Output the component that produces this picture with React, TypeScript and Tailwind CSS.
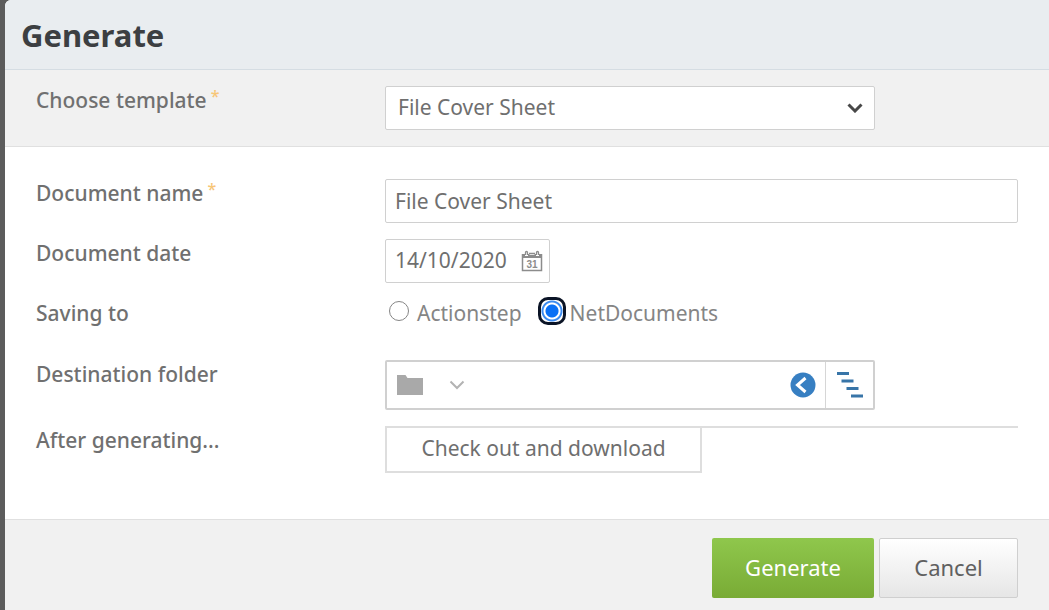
import { useState } from 'react';
import type { ReactNode } from 'react';
import cx from 'clsx';

const fieldStyle = 'h-11 rounded-xs border border-[#d0d0d0] bg-white text-[#6f6f6f]';

interface FieldRowProps {
  label: string;
  htmlFor?: string;
  id?: string;
  required?: boolean;
  className?: string;
  children: ReactNode;
}

const FieldRow = ({ label, htmlFor, id, required, className, children }: FieldRowProps) => {
  const Label = htmlFor ? 'label' : 'span';

  return (
    <div className={cx('grid grid-cols-[minmax(0,349px)_minmax(0,1fr)] items-start', className)}>
      <Label htmlFor={htmlFor} id={id} className="flex gap-1 leading-7 font-medium text-[#707070]">
        {label}
        {required && <span className="text-base leading-5 text-[#f7c677]">*</span>}
      </Label>
      {children}
    </div>
  );
};

const ChevronIcon = ({ className }: { className?: string }) => (
  <svg viewBox="0 0 16 10" fill="none" stroke="currentColor" className={className} aria-hidden="true">
    <path d="M1.5 1.5 8 8l6.5-6.5" />
  </svg>
);

const CalendarIcon = () => (
  <svg viewBox="0 0 22 22" className="h-[22px] w-[22px]" aria-hidden="true">
    <path d="M1.5 4v16.5h19V4" fill="none" stroke="#8c8c8c" strokeWidth="1.5" />
    <path d="M1 4h3v2h3V4h1.5v1h5V4H15v2h3V4h3v4H1z" fill="#8c8c8c" />
    <path
      d="M4.5 5V2.5a1 1 0 0 1 2 0V5M15.5 5V2.5a1 1 0 0 1 2 0V5M8 3.5h6"
      fill="none"
      stroke="#8c8c8c"
      strokeWidth="1.3"
    />
    <text
      x="11"
      y="17.5"
      textAnchor="middle"
      fill="#8c8c8c"
      fontSize="10"
      fontWeight="700"
      fontFamily="Liberation Sans, sans-serif"
    >
      31
    </text>
  </svg>
);

const FolderIcon = () => (
  <svg viewBox="0 0 26 20" className="h-5 w-[26px]" fill="#a9a9a9" aria-hidden="true">
    <path d="M0 0h8.5l2 3H26v17H0z" />
  </svg>
);

const BackIcon = () => (
  <svg viewBox="0 0 26 26" className="h-[26px] w-[26px]" aria-hidden="true">
    <circle cx="13" cy="13" r="12.5" fill="#377fc2" />
    <path d="m15.5 6-8 7 8 7" fill="none" stroke="#fff" strokeWidth="3" />
  </svg>
);

const TreeIcon = () => (
  <svg viewBox="0 0 26 26" className="h-[26px] w-[26px]" fill="#3875a8" aria-hidden="true">
    <path d="M0 0h12v3H0zM4.500 7.500h12v3h-12zM9.500 15h12v3h-12zM14 22.500h12v3H14z" />
  </svg>
);

const destinations = ['Actionstep', 'NetDocuments'];

const App = () => {
  const [name, setName] = useState('File Cover Sheet');
  const [date, setDate] = useState('14/10/2020');
  const [destination, setDestination] = useState('NetDocuments');

  return (
    <div className="flex min-h-screen bg-[#5c5c5c] pl-[5px] font-['Noto_Sans','Open_Sans',sans-serif] text-[21px]">
      <form
        className="flex flex-1 flex-col overflow-hidden rounded-tl-md bg-white"
        onSubmit={(e) => e.preventDefault()}
      >
        <header className="border-b border-[#d5dde3] bg-[#e9edf0] px-4 pt-[15px] pb-[14px]">
          <h1 className="text-[31px] leading-10 font-bold text-[#3c3f42]">Generate</h1>
        </header>

        <FieldRow
          label="Choose template"
          htmlFor="template"
          required
          className="border-b border-[#e0e0e0] bg-[#f1f1f1] px-[31px] py-4"
        >
          <div className="relative w-full max-w-[490px]">
            <select id="template" className={cx(fieldStyle, 'w-full appearance-none px-3 pr-10')}>
              <option>File Cover Sheet</option>
            </select>
            <ChevronIcon className="pointer-events-none absolute top-[17px] right-3 h-[10px] w-4 stroke-3 text-[#484848]" />
          </div>
        </FieldRow>

        <div className="flex flex-1 flex-col gap-4 px-[31px] pt-8 pb-[46px]">
          <FieldRow label="Document name" htmlFor="name" required>
            <input
              id="name"
              type="text"
              value={name}
              onChange={(e) => setName(e.target.value)}
              className={cx(fieldStyle, 'w-full px-[9px]')}
            />
          </FieldRow>

          <FieldRow label="Document date" htmlFor="date">
            <div className={cx(fieldStyle, 'flex w-[165px] items-center justify-between pr-1.5 pl-[9px]')}>
              <input
                id="date"
                type="text"
                value={date}
                onChange={(e) => setDate(e.target.value)}
                className="w-[120px] outline-none"
              />
              <button type="button" aria-label="Open calendar">
                <CalendarIcon />
              </button>
            </div>
          </FieldRow>

          <FieldRow label="Saving to" id="saving-to">
            <div role="radiogroup" aria-labelledby="saving-to" className="flex h-[45px] gap-5 pl-1 leading-7">
              {destinations.map((item) => (
                <label key={item} className="flex h-7 items-center gap-2 text-[#858585]">
                  <input
                    type="radio"
                    name="destination"
                    value={item}
                    checked={destination === item}
                    onChange={() => setDestination(item)}
                    className="mb-1 h-5 w-5 appearance-none rounded-full border border-[#858585] bg-white checked:-mx-1 checked:h-7 checked:w-7 checked:rounded-[10px] checked:border-3 checked:border-[#0b1426] checked:bg-[radial-gradient(circle,#0a70f5_6px,#fff_7px,#fff_8px,#3b8bf0_9px,#3b8bf0_10px,#fff_11px)]"
                  />
                  {item}
                </label>
              ))}
            </div>
          </FieldRow>

          <FieldRow label="Destination folder" id="folder">
            <div
              role="group"
              aria-labelledby="folder"
              className="flex h-[50px] w-full max-w-[490px] items-center rounded-xs border-2 border-[#d0d0d0] bg-white"
            >
              <button type="button" aria-label="Choose folder" className="flex items-center gap-[26px] pl-[10px]">
                <FolderIcon />
                <ChevronIcon className="h-[10px] w-4 stroke-2 text-[#b3b3b3]" />
              </button>
              <button type="button" aria-label="Back" className="mr-[9px] ml-auto">
                <BackIcon />
              </button>
              <button
                type="button"
                aria-label="Browse folders"
                className="flex w-12 items-center justify-center self-stretch border-l border-[#d6d6d6]"
              >
                <TreeIcon />
              </button>
            </div>
          </FieldRow>

          <FieldRow label="After generating..." id="after">
            <div className="border-t-2 border-[#dedede]">
              <button
                type="button"
                className="h-[45px] w-[317px] max-w-full border-2 border-t-0 border-[#dedede] bg-white pb-0.5 text-[#6f6f6f]"
              >
                Check out and download
              </button>
            </div>
          </FieldRow>
        </div>

        <footer className="flex justify-end gap-[5px] border-t border-[#e0e0e0] bg-[#f1f1f1] px-[31px] pt-[18px] pb-3 text-[22px]">
          <button
            type="submit"
            className="h-[60px] w-[162px] rounded-xs bg-linear-to-b from-[#8fc74c] to-[#79ab35] pb-0.5 text-white"
          >
            Generate
          </button>
          <button
            type="button"
            className="h-[60px] w-[139px] rounded-xs border border-[#cfcfcf] bg-linear-to-b from-white to-[#e6e6e6] pb-0.5 text-[#606060]"
          >
            Cancel
          </button>
        </footer>
      </form>
    </div>
  );
};

export default App;
